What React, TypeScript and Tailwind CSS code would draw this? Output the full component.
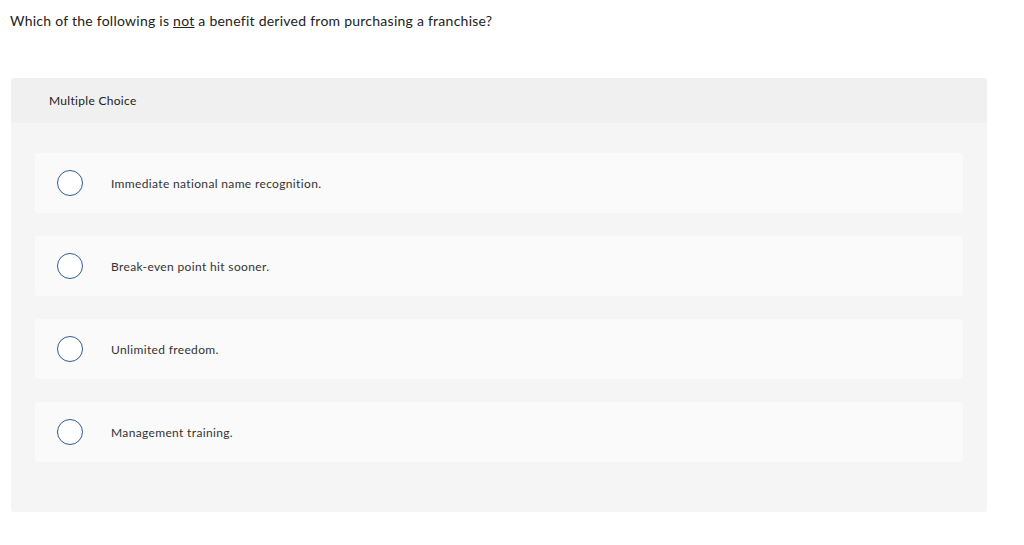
const choices = [
  "Immediate national name recognition.",
  "Break-even point hit sooner.",
  "Unlimited freedom.",
  "Management training.",
];

export default function App() {
  return (
    <div className="min-h-[545px] bg-white font-['Lato','Liberation_Sans',sans-serif] text-[#333]">
      {/* question */}
      <p className="px-[10px] pt-[12px] text-[14px] leading-[18px] tracking-[0.25px] text-[#222]">
        Which of the following is <span className="underline">not</span> a benefit derived from purchasing a franchise?
      </p>

      {/* card */}
      <div className="mt-[48px] ml-[11px] w-[976px] rounded-[3px] bg-[#f5f5f5]">
        <div className="h-[45px] flex items-center pl-[38px] pt-[1px] rounded-t-[3px] bg-[#f0f0f0] text-[12px] tracking-[0.3px] text-[#222]">
          Multiple Choice
        </div>
        <div className="px-[24px] pt-[30px] pb-[50px] flex flex-col gap-[23px]">
          {choices.map((c) => (
            <div key={c} className="h-[60px] flex items-center rounded-[3px] bg-[#fafafa]">
              <span className="ml-[22px] w-[26px] h-[26px] rounded-full border border-[#2f5b94] bg-white" />
              <span className="ml-[28px] pt-[2px] text-[12px] tracking-[0.35px] text-[#333]">{c}</span>
            </div>
          ))}
        </div>
      </div>
    </div>
  );
}
